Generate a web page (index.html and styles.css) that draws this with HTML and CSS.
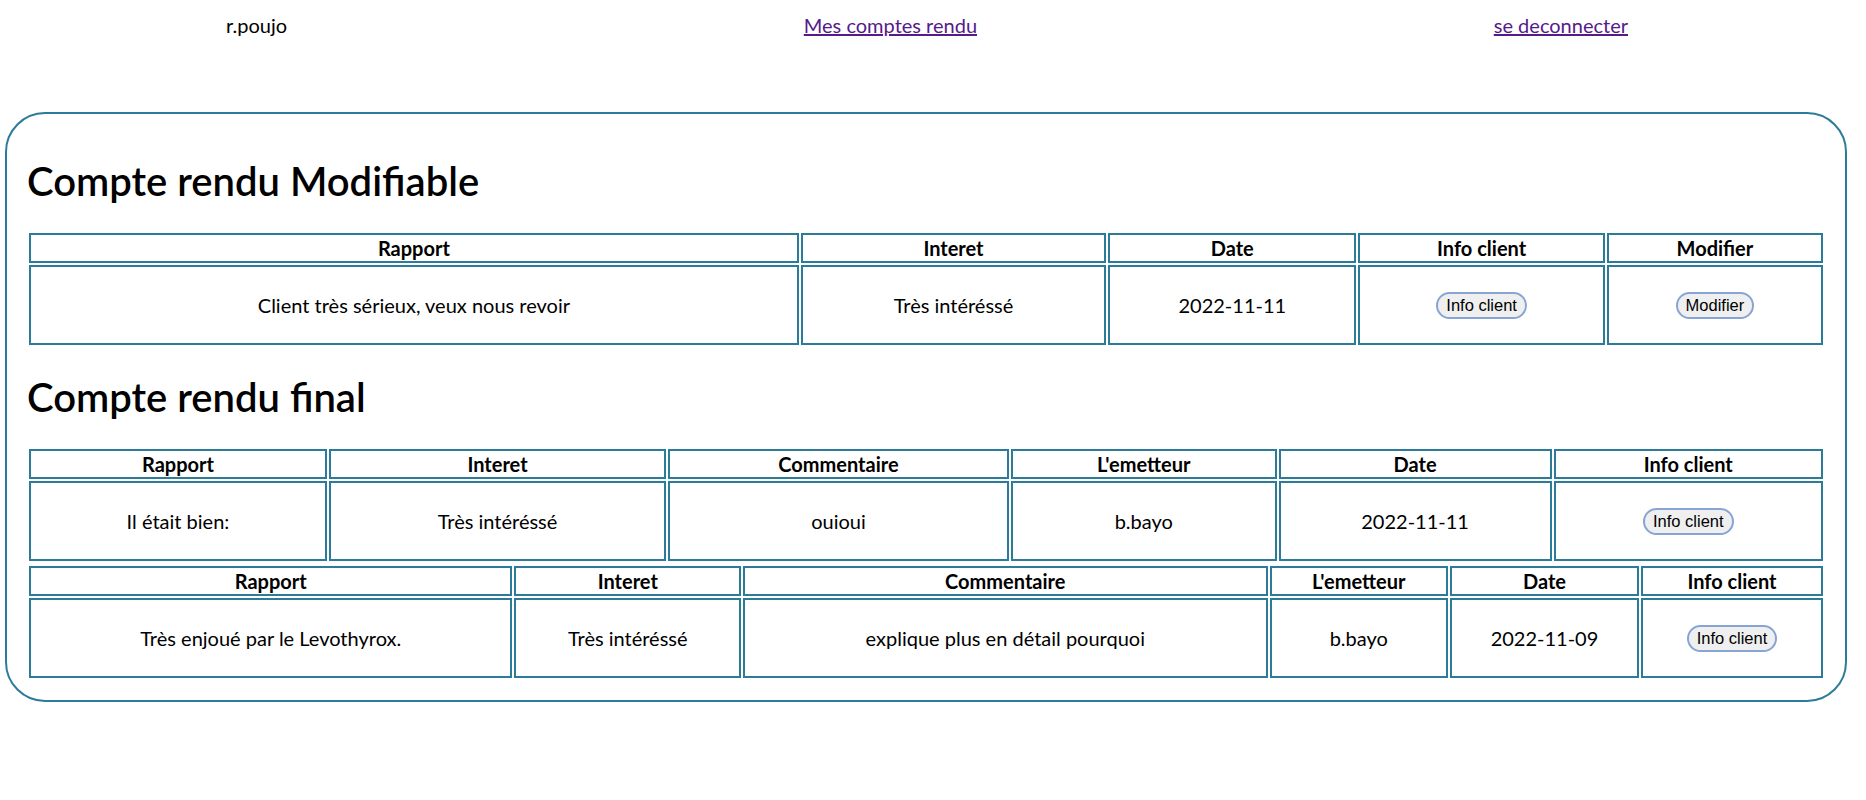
FILE: index.html
```html
<!DOCTYPE html>
<html lang="fr">
<head>
<meta charset="utf-8">
<title>Comptes rendus</title>
<link rel="stylesheet" href="styles.css">
</head>
<body>
<header class="topbar">
  <span class="user">r.poujo</span>
  <a href="#" class="nav-link">Mes comptes rendu</a>
  <a href="#" class="nav-link">se deconnecter</a>
</header>
<main class="card">
  <h1 class="section-title">Compte rendu Modifiable</h1>
  <table class="report report-edit">
    <thead>
      <tr><th>Rapport</th><th>Interet</th><th>Date</th><th>Info client</th><th>Modifier</th></tr>
    </thead>
    <tbody>
      <tr>
        <td>Client très sérieux, veux nous revoir</td>
        <td>Très intéréssé</td>
        <td>2022-11-11</td>
        <td><button class="pill">Info client</button></td>
        <td><button class="pill">Modifier</button></td>
      </tr>
    </tbody>
  </table>
  <h2 class="section-title section-title--final">Compte rendu final</h2>
  <table class="report report-final-a">
    <thead>
      <tr><th>Rapport</th><th>Interet</th><th>Commentaire</th><th>L'emetteur</th><th>Date</th><th>Info client</th></tr>
    </thead>
    <tbody>
      <tr>
        <td>Il était bien:</td>
        <td>Très intéréssé</td>
        <td>ouioui</td>
        <td>b.bayo</td>
        <td>2022-11-11</td>
        <td><button class="pill">Info client</button></td>
      </tr>
    </tbody>
  </table>
  <table class="report report-final-b">
    <thead>
      <tr><th>Rapport</th><th>Interet</th><th>Commentaire</th><th>L'emetteur</th><th>Date</th><th>Info client</th></tr>
    </thead>
    <tbody>
      <tr>
        <td>Très enjoué par le Levothyrox.</td>
        <td>Très intéréssé</td>
        <td>explique plus en détail pourquoi</td>
        <td>b.bayo</td>
        <td>2022-11-09</td>
        <td><button class="pill">Info client</button></td>
      </tr>
    </tbody>
  </table>
</main>
</body>
</html>
```

FILE: styles.css
```css
html, body {
  background: #ffffff;
}

body {
  margin: 0;
  font-family: Lato, "Noto Sans", sans-serif;
  font-size: 20px;
  color: #000000;
}

.topbar {
  display: flex;
  justify-content: space-between;
  align-items: baseline;
  padding: 13px 238px 0 226px;
  line-height: 24px;
}

.nav-link {
  color: #551a8b;
  text-decoration: underline;
}

.card {
  margin: 75px 19px 0 5px;
  border: 2px solid #2b7b99;
  border-radius: 40px;
  padding: 16px 20px 20px 20px;
}

.section-title {
  font-size: 40px;
  font-weight: 600;
  line-height: 48px;
  margin: 27px 0 26px 0;
}

.section-title--final {
  margin: 26px 0 26px 0;
}

.report {
  width: 100%;
  table-layout: fixed;
  border-collapse: separate;
  border-spacing: 2.5px;
}

.report + .report {
  margin-top: 1px;
}

.report th,
.report td {
  box-sizing: border-box;
  border: 2px solid #2b7b99;
  text-align: center;
  vertical-align: middle;
}

.report th {
  font-weight: 700;
  line-height: 26px;
  padding: 0 2px;
}

.report td {
  font-weight: 400;
  line-height: 24px;
  height: 80px;
  padding: 0 4px;
}

.report-edit th:nth-child(1) { width: 43.1%; }
.report-edit th:nth-child(2) { width: 17.1%; }
.report-edit th:nth-child(3) { width: 13.9%; }
.report-edit th:nth-child(4) { width: 13.8%; }
.report-edit th:nth-child(5) { width: 12.1%; }

.report-final-a th:nth-child(1) { width: 16.7%; }
.report-final-a th:nth-child(2) { width: 18.9%; }
.report-final-a th:nth-child(3) { width: 19.1%; }
.report-final-a th:nth-child(4) { width: 14.9%; }
.report-final-a th:nth-child(5) { width: 15.3%; }
.report-final-a th:nth-child(6) { width: 15.1%; }

.report-final-b th:nth-child(1) { width: 27.1%; }
.report-final-b th:nth-child(2) { width: 12.7%; }
.report-final-b th:nth-child(3) { width: 29.4%; }
.report-final-b th:nth-child(4) { width: 10.0%; }
.report-final-b th:nth-child(5) { width: 10.6%; }
.report-final-b th:nth-child(6) { width: 10.2%; }

.pill {
  font-family: "Liberation Sans", Arial, sans-serif;
  font-size: 16.5px;
  line-height: 19px;
  color: #000000;
  background: #efefef;
  border: 2px solid #86a4d6;
  border-radius: 14px;
  padding: 2px 8px;
  vertical-align: middle;
  cursor: pointer;
}
```
